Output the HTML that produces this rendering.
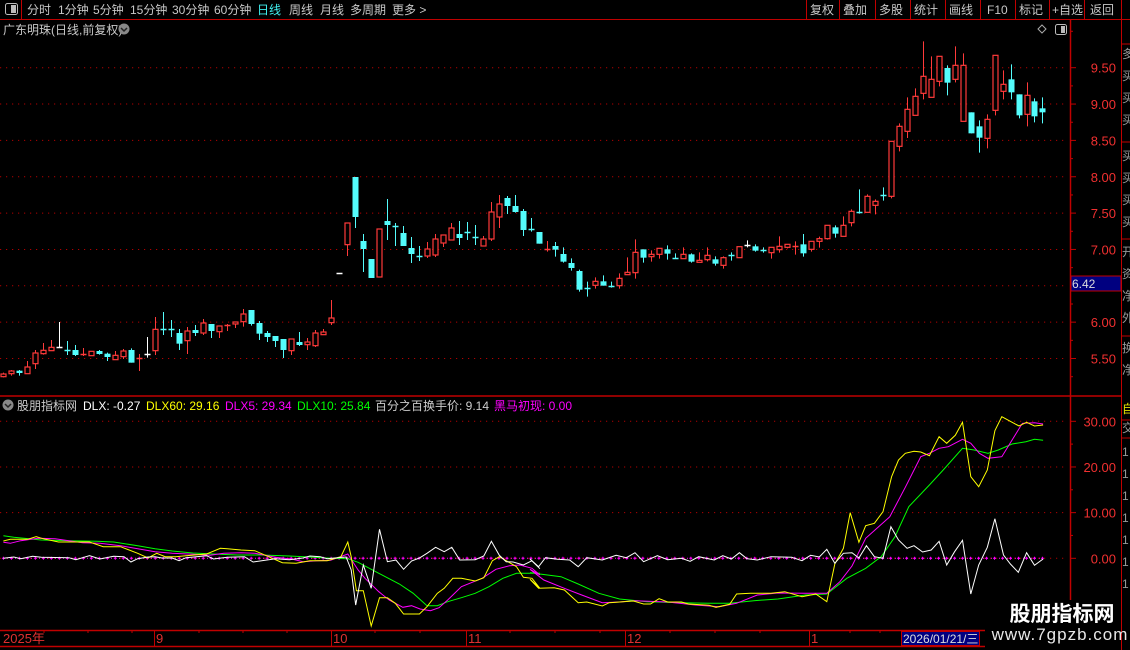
<!DOCTYPE html>
<html><head><meta charset="utf-8"><style>
body{margin:0;background:#000;width:1130px;height:650px;overflow:hidden;font-family:"Liberation Sans","Noto Sans CJK SC",sans-serif;}
svg{position:absolute;left:0;top:0}
text{font-family:"Liberation Sans","Noto Sans CJK SC",sans-serif}
</style></head><body>
<svg id="s" width="1130" height="650" viewBox="0 0 1130 650" xmlns="http://www.w3.org/2000/svg">
<rect width="1130" height="650" fill="#000"/>
<!-- toolbar -->
<line x1="0" y1="19.5" x2="1130" y2="19.5" stroke="#c00000"/>
<line x1="21.5" y1="0" x2="21.5" y2="19" stroke="#c00000"/>
<rect x="5.5" y="3.5" width="12" height="11" rx="2" fill="none" stroke="#bbb"/><rect x="11" y="5" width="5" height="8" fill="#bbb"/>
<g font-size="12" fill="#c8c8c8">
<text x="27" y="14">分时</text><text x="58" y="14">1分钟</text><text x="93" y="14">5分钟</text><text x="130" y="14">15分钟</text><text x="172" y="14">30分钟</text><text x="214" y="14">60分钟</text>
<text x="257" y="14" fill="#40f0f0">日线</text><text x="289" y="14">周线</text><text x="320" y="14">月线</text><text x="350" y="14">多周期</text><text x="392" y="14">更多 &gt;</text>
<text x="810" y="14">复权</text><text x="843" y="14">叠加</text><text x="879" y="14">多股</text><text x="914" y="14">统计</text><text x="949" y="14">画线</text><text x="987" y="14">F10</text><text x="1019" y="14">标记</text><text x="1052" y="14">+自选</text><text x="1090" y="14">返回</text>
</g>
<g stroke="#c00000"><line x1="806.5" y1="0" x2="806.5" y2="19"/><line x1="839.5" y1="0" x2="839.5" y2="19"/><line x1="875.5" y1="0" x2="875.5" y2="19"/><line x1="910.5" y1="0" x2="910.5" y2="19"/><line x1="945.5" y1="0" x2="945.5" y2="19"/><line x1="980.5" y1="0" x2="980.5" y2="19"/><line x1="1015.5" y1="0" x2="1015.5" y2="19"/><line x1="1049.5" y1="0" x2="1049.5" y2="19"/><line x1="1084.5" y1="0" x2="1084.5" y2="19"/><line x1="1121.5" y1="0" x2="1121.5" y2="19"/></g>
<text x="3" y="34" font-size="12" fill="#c8c8c8">广东明珠(日线,前复权)</text>
<circle cx="124" cy="29" r="5.5" fill="#888"/><path d="M121 28 l3 3 l3 -3" stroke="#222" stroke-width="1.5" fill="none"/>
<path d="M1042 25 l4 4 l-4 4 l-4 -4z" fill="none" stroke="#aaa"/>
<rect x="1055.5" y="24.5" width="11" height="10" rx="2" fill="none" stroke="#bbb"/><rect x="1061" y="26" width="4" height="7" fill="#bbb"/>
<!-- frames -->
<line x1="1070.5" y1="19" x2="1070.5" y2="647" stroke="#c00000" stroke-width="1.5"/>
<line x1="1121.5" y1="19" x2="1121.5" y2="650" stroke="#c00000"/>
<line x1="0" y1="396" x2="1121" y2="396" stroke="#c00000" stroke-width="1.5"/>
<line x1="0" y1="630.5" x2="1070" y2="630.5" stroke="#c00000" stroke-width="1.5"/>
<line x1="0" y1="646.5" x2="1070" y2="646.5" stroke="#c00000" stroke-width="1.5"/>
<g id="grid"></g>
<rect x="1071" y="276" width="50" height="15" fill="#000080" stroke="#c00000"/>
<text x="1072" y="288" font-size="12" fill="#ddd">6.42</text>
<g stroke="#c00000"><line x1="1121" y1="44" x2="1130" y2="44"/><line x1="1121" y1="142" x2="1130" y2="142"/><line x1="1121" y1="239" x2="1130" y2="239"/><line x1="1121" y1="336" x2="1130" y2="336"/><line x1="1121" y1="420" x2="1130" y2="420"/><line x1="1121" y1="438" x2="1130" y2="438"/></g>
<g font-size="12" fill="#999"><text x="1122" y="58">多</text><text x="1122" y="80">买</text><text x="1122" y="102">买</text><text x="1122" y="124">买</text><text x="1122" y="160">买</text><text x="1122" y="182">买</text><text x="1122" y="204">买</text><text x="1122" y="226">买</text><text x="1122" y="256">开</text><text x="1122" y="278">资</text><text x="1122" y="300">净</text><text x="1122" y="322">外</text><text x="1122" y="352">换</text><text x="1122" y="374">净</text><text x="1122" y="432">交</text>
<text x="1122" y="456">1</text><text x="1122" y="478">1</text><text x="1122" y="500">1</text><text x="1122" y="522">1</text><text x="1122" y="544">1</text><text x="1122" y="566">1</text><text x="1122" y="588">1</text></g>
<text x="1122" y="413" font-size="12" fill="#e0e000">自</text>
<circle cx="8" cy="405" r="5.5" fill="#888"/><path d="M5 404 l3 3 l3 -3" stroke="#222" stroke-width="1.5" fill="none"/>
<text y="410" font-size="12"><tspan x="17" fill="#ccc">股朋指标网</tspan><tspan x="83" fill="#fff">DLX: -0.27</tspan><tspan x="146" fill="#ffff00">DLX60: 29.16</tspan><tspan x="225" fill="#ff00ff">DLX5: 29.34</tspan><tspan x="297" fill="#00ff00">DLX10: 25.84</tspan><tspan x="375" fill="#ccc">百分之百换手价: 9.14</tspan><tspan x="494" fill="#ff00ff">黑马初现: 0.00</tspan></text>
<g id="cand"></g>
<g id="ind" fill="none" stroke-width="1"></g>
<g stroke="#c00000"><line x1="154.5" y1="630" x2="154.5" y2="646"/><line x1="331.5" y1="630" x2="331.5" y2="646"/><line x1="466.5" y1="630" x2="466.5" y2="646"/><line x1="625.5" y1="630" x2="625.5" y2="646"/><line x1="809.5" y1="630" x2="809.5" y2="646"/></g>
<g font-size="13" fill="#e03030"><text x="3" y="643">2025年</text><text x="156" y="643">9</text><text x="333" y="643">10</text><text x="468" y="643">11</text><text x="627" y="643">12</text><text x="811" y="643">1</text></g>
<rect x="901.5" y="631.5" width="78" height="14" fill="#000080" stroke="#c00000"/>
<text x="903" y="643" font-size="12" fill="#ddd">2026/01/21/三</text>
<rect x="985" y="600" width="136" height="50" fill="#000"/>
<text x="1062" y="621" font-size="21" font-weight="bold" fill="#fff" text-anchor="middle">股朋指标网</text>
<text x="1060" y="640" font-size="17" fill="#e8e8e8" text-anchor="middle" letter-spacing="1">www.7gpzb.com</text>
</svg>
<script>
var NS="http://www.w3.org/2000/svg";
function el(p,t,a){var e=document.createElementNS(NS,t);for(var k in a)e.setAttribute(k,a[k]);p.appendChild(e);return e;}
var g=document.getElementById("grid");
var labs=["9.50","9.00","8.50","8.00","7.50","7.00","6.50","6.00","5.50"];
for(var k=0;k<9;k++){var y=67.7+k*36.35;
 el(g,"line",{x1:0,y1:y,x2:1068,y2:y,stroke:"#b00000","stroke-dasharray":"1.2 4.8"});
 el(g,"line",{x1:1070,y1:y,x2:1076,y2:y,stroke:"#c00000"});
 el(g,"line",{x1:1070,y1:y+18.2,x2:1073,y2:y+18.2,stroke:"#c00000"});
 var t=el(g,"text",{x:1116,y:y+5,"font-size":"13",fill:"#f03030","text-anchor":"end"});t.textContent=labs[k];
}
el(g,"line",{x1:1070,y1:31.3,x2:1073,y2:31.3,stroke:"#c00000"});
var il=["30.00","20.00","10.00","0.00"];
for(var k=0;k<4;k++){var y=421.3+k*45.67;
 el(g,"line",{x1:0,y1:y,x2:1068,y2:y,stroke:"#b00000","stroke-dasharray":"1.2 4.8"});
 el(g,"line",{x1:1070,y1:y,x2:1076,y2:y,stroke:"#c00000"});
 if(k<3)el(g,"line",{x1:1070,y1:y+22.8,x2:1073,y2:y+22.8,stroke:"#c00000"});
 var t=el(g,"text",{x:1116,y:y+5,"font-size":"13",fill:"#f03030","text-anchor":"end"});t.textContent=il[k];}
[44,88,132,199,243,287,375,420,510,555,600,670,715,760,850,880].forEach(function(x){el(g,"line",{x1:x,y1:630,x2:x,y2:633,stroke:"#c00000"});});
var A="r 612 620 608 622|r 603 611 600 617|c 602 609 600 617|r 591 611 573 611|r 549 581 540 597|r 541 551 519 554|r 532 542 510 542|w 532 532 456 532|c 541 541 513 555|c 540 555 525 558|r 551 551 534 558|r 544 557 544 557|c 543 552 540 554|c 551 561 548 573|r 556 569 543 569|r 543 560 537 567|c 540 578 535 578|r 563 563 552 603|w 552 552 501 563|r 478 542 441 555|c 478 478 426 495|c 478 478 450 501|c 489 521 477 540|r 483 512 471 552|c 480 489 465 498|r 459 489 447 495|c 462 483 462 504|r 468 485 468 504|r 466 466 462 483|r 456 462 456 474|r 432 455 417 470|c 420 462 420 467|c 459 491 453 510|c 489 501 483 516|c 498 513 498 531|c 507 540 507 564|r 507 542 507 555|c 516 525 486 528|r 516 524 504 540|r 489 527 480 531|r 486 494 477 494|r 444 458 390 465|w 310 310 310 310|r 159 224 159 258|c 21 141 21 174|c 213 237 192 306|c 267 324 267 324|r 177 321 177 321|c 153 165 87 210|c 168 168 159 228|c 189 228 168 228|c 234 252 201 279|c 258 258 228 273|r 237 258 216 264|r 207 255 192 261|r 195 219 195 231|r 174 210 159 210|c 192 204 153 225|c 186 186 156 210|c 201 201 165 225|r 207 228 198 228|r 126 207 96 213|r 102 141 75 174|c 84 108 78 132|c 108 126 75 128|c 123 180 117 198";
var B="c 597 597 564 605|c 606 641 606 641|r 656 656 633 665|c 648 659 636 680|c 672 695 652 698|c 699 714 685 722|c 723 779 719 785|c 773 773 755 800|r 754 766 742 776|c 754 767 736 767|c 769 769 755 773|r 745 767 730 776|r 727 734 682 734|r 667 728 628 746|c 658 683 658 698|r 673 680 661 695|r 655 673 655 686|c 658 671 646 689|c 683 683 670 686|r 673 686 652 686|c 673 695 670 698|r 691 697 667 697|r 676 689 652 694|c 688 701 679 707|r 683 706 679 716|c 676 676 667 692|r 650 683 650 683|w 646 646 631 652|c 649 662 643 665|c 659 659 652 668|r 652 668 652 686|r 649 659 619 668|r 643 652 643 655|r 649 649 634 674|c 643 670 612 680|r 634 658 634 665|r 626 634 620 653|r 586 626 586 629|c 592 611 586 623|r 586 619 559 619|r 544 578 538 589|c 545 545 478 551|r 499 547 493 547|r 514 526 508 553|c 496 496 472 512|r 334 499 334 505|r 289 349 280 364|r 238 304 202 324|r 199 256 175 256|r 139 190 34 208|r 148 202 79 202|r 79 154 79 169|c 114 158 106 196|r 106 148 49 157|r 106 274 70 274|c 247 310 247 310|c 289 323 271 368|r 268 325 253 355|r 76 241 76 256|r 163 184 121 208|c 148 187 103 208|c 193 256 193 265|r 196 253 157 289|c 214 259 205 277|c 235 247 202 280";
var cg=document.getElementById("cand");
function draw(list,base,off){list.split("|").forEach(function(s,j){var p=s.split(" "),i=j+off,x=Math.round(3.4+7.993*i)+0.5;
 var bt=base+p[1]/3,bb=base+p[2]/3,wt=base+p[3]/3,wb=base+p[4]/3;
 var col=p[0]=="r"?"#ff3a3a":(p[0]=="c"?"#54fcfc":"#ffffff");
 if(wb-wt>0.5)el(cg,"line",{x1:x,y1:wt,x2:x,y2:wb,stroke:col});
 if(bb-bt<1.5){el(cg,"line",{x1:x-3,y1:Math.round(bt)+0.5,x2:x+3,y2:Math.round(bt)+0.5,stroke:col,"stroke-width":1.5});}
 else if(p[0]=="r"){el(cg,"rect",{x:x-2.5,y:bt,width:5,height:bb-bt,fill:"#000",stroke:col,"stroke-width":1.2});}
 else el(cg,"rect",{x:x-3,y:bt,width:6,height:bb-bt,fill:col});
});}
draw(A,170,0);draw(B,30,66);
var ig=document.getElementById("ind");
el(ig,"line",{x1:3,y1:558.3,x2:1043,y2:558.3,stroke:"#ff00ff","stroke-dasharray":"1 3"});
for(var i=0;i<=130;i++){var x=3.4+7.993*i;el(ig,"path",{d:"M"+(x-1.5)+" 558.3h3M"+x+" 556.8v3",stroke:"#ff00ff"});}
var L={
w1:"10,445 40,441 60,446 95,439 120,442 200,443 220,449 260,437 290,447 330,439 360,440 380,456 400,446 430,441 450,440 470,444 500,444 520,452 540,443 600,437 620,447 660,442 710,440 735,456 760,452 800,446 840,449 880,444 900,438 930,440 950,446 980,443 1005,441 1020,480 1033,585 1055,465 1078,535 1102,358 1125,455 1150,450 1172,478 1195,453 1218,444 1240,430 1265,412 1290,425 1312,412 1335,450 1380,449 1405,438 1427,394 1450,436 1470,455 1490,456 1520,465 1545,452 1568,476",
w2:"0,447 25,470 45,443 80,448 115,450 140,470 165,443 210,450 250,436 280,443 305,428 330,455 370,437 400,449 440,445 465,454 490,440 535,450 560,437 585,447 608,428 630,446 660,450 700,440 760,442 790,452 815,436 840,441 862,418 885,460 910,430 935,428 955,444 977,407 1000,440 1025,445 1048,350 1070,390 1095,415 1115,407 1140,426 1165,420 1188,394 1210,465 1233,425 1256,391 1280,552 1303,465 1328,412 1350,326 1375,435 1395,462 1418,487 1442,428 1465,466 1490,447",
y1:"10,393 30,388 80,388 105,380 125,386 170,396 260,396 300,410 350,410 400,430 430,444 455,430 480,440 510,440 540,437 600,432 640,415 660,416 700,420 740,422 780,440 820,458 860,460 900,452 950,452 990,440 1010,396 1020,440 1035,542 1055,542 1078,648 1102,563 1125,563 1148,580 1172,612 1218,612 1240,590 1270,550 1290,535 1315,505 1340,505 1380,513 1405,503 1430,452 1450,440 1475,455 1500,470 1520,502 1545,505 1568,535",
y2:"0,508 25,535 70,533 100,540 140,578 165,576 210,588 230,578 300,573 330,582 350,582 375,566 400,576 440,576 460,582 520,586 540,592 580,583 600,552 640,550 700,550 740,545 790,560 830,552 862,575 885,462 910,415 930,308 955,397 975,347 1000,340 1025,305 1050,200 1070,150 1090,130 1115,124 1135,126 1160,137 1188,80 1210,100 1235,76 1256,37 1280,200 1303,230 1328,180 1350,62 1370,20 1420,48 1442,37 1465,48 1490,45",
m1:"10,397 30,400 60,392 110,385 160,386 240,398 290,400 350,407 400,416 450,425 500,430 560,433 610,436 650,430 700,428 740,430 800,442 850,448 880,455 920,452 960,451 1010,432 1040,480 1060,505 1100,545 1130,570 1170,592 1195,587 1220,597 1250,602 1275,593 1300,570 1340,530 1400,505 1440,478 1480,467 1510,465 1545,475 1568,495",
m2:"0,478 40,510 100,535 150,555 210,578 260,576 300,572 400,576 480,585 550,590 600,580 660,555 720,549 800,550 862,550 900,515 935,468 975,385 1045,320 1090,232 1135,140 1160,130 1188,115 1215,110 1256,88 1280,100 1305,130 1330,145 1370,140 1400,90 1430,40 1465,38 1490,42",
g1:"10,377 40,382 120,390 200,392 280,394 330,396 400,407 450,416 500,423 560,429 620,432 690,435 760,435 840,438 900,441 960,445 1010,446 1040,457 1100,490 1160,522 1200,550 1240,587 1270,587 1300,575 1340,563 1380,550 1420,530 1460,505 1500,490 1568,490",
g2:"0,488 90,500 140,522 200,550 260,567 340,575 440,578 520,580 580,580 650,572 720,567 800,555 862,552 920,505 975,475 1020,440 1060,380 1100,290 1160,225 1200,180 1256,115 1290,120 1330,130 1360,120 1400,102 1440,95 1465,88 1490,91"};
function conv(s,bx){return s.split(" ").map(function(q){var a=q.split(",");return (bx+a[0]/2.904).toFixed(1)+","+(410+a[1]/3).toFixed(1);}).join(" ");}
[["g","#00ff00"],["m","#ff00ff"],["y","#ffff00"],["w","#ffffff"]].forEach(function(c){
 el(ig,"polyline",{points:conv(L[c[0]+"1"],0)+" "+conv(L[c[0]+"2"],530),stroke:c[1],fill:"none"});});
</script>
</body></html>
